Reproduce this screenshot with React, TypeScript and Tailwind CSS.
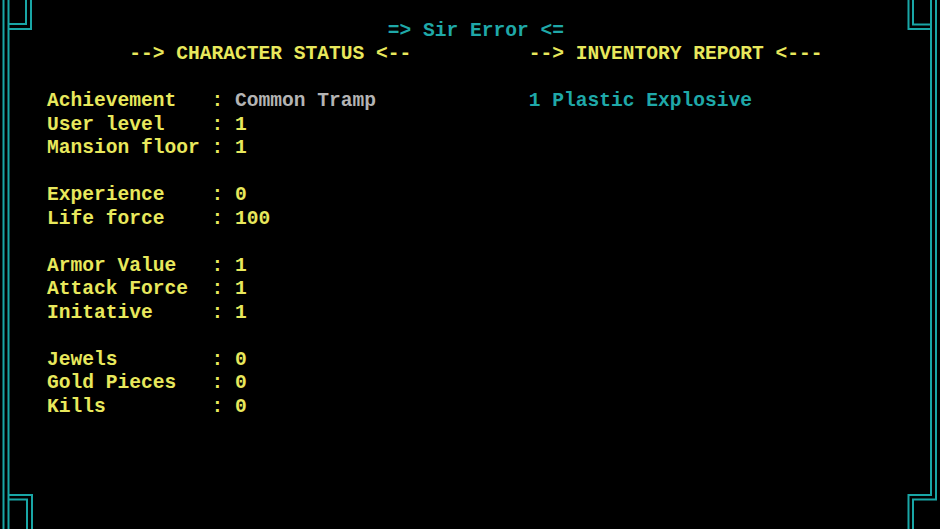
import React from "react";

const Y = "text-[#e8e85c]";
const G = "text-[#b4b4b4]";
const C = "text-[#1fa8a8]";

type Seg = { t: string; c: string };

const stats: [string, string][][] = [
  [["Achievement", "Common Tramp"], ["User level", "1"], ["Mansion floor", "1"]],
  [["Experience", "0"], ["Life force", "100"]],
  [["Armor Value", "1"], ["Attack Force", "1"], ["Initative", "1"]],
  [["Jewels", "0"], ["Gold Pieces", "0"], ["Kills", "0"]],
];

function buildRows(): Seg[][] {
  const rows: Seg[][] = [];
  rows.push([{ t: " ".repeat(33) + "=> Sir Error <=", c: C }]);
  rows.push([
    { t: " ".repeat(11) + "--> CHARACTER STATUS <--", c: Y },
    { t: " ".repeat(10) + "--> INVENTORY REPORT <---", c: Y },
  ]);
  stats.forEach((group) => {
    rows.push([{ t: " ", c: Y }]);
    group.forEach(([label, value]) => {
      const left = "    " + label.padEnd(14, " ") + ": ";
      const row: Seg[] = [
        { t: left, c: Y },
        { t: value, c: label === "Achievement" ? G : Y },
      ];
      if (label === "Achievement") {
        const used = left.length + value.length;
        row.push({ t: " ".repeat(45 - used) + "1 Plastic Explosive", c: C });
      }
      rows.push(row);
    });
  });
  return rows;
}

function Frame() {
  const s = { stroke: "#19a6a6", strokeWidth: 2, fill: "none" };
  return (
    <svg className="absolute inset-0 pointer-events-none" width={940} height={529} viewBox="0 0 940 529">
      {/* left border */}
      <path d="M3.5 0V529M8.5 0V529" {...s} />
      <path d="M26 0V24H8.5M31 0V29H8.5" {...s} />
      <path d="M8.5 495H32V529M8.5 499.5H27V529" {...s} />
      {/* right border */}
      <path d="M931 0V495H908.5V529M936 0V499.5H913V529" {...s} />
      <path d="M913 0V24.5H931M908.5 0V29H931" {...s} />
    </svg>
  );
}

export default function App() {
  const rows = buildRows();

  return (
    <div className="relative w-[940px] h-[529px] bg-black overflow-hidden">
      <Frame />
      <div className="pt-[19.5px] font-['Liberation_Mono',monospace] font-bold text-[19.58px] leading-[23.5px] whitespace-pre">
        {rows.map((row, i) => (
          <div key={i} className="h-[23.5px]">
            {row.map((seg, j) => (
              <span key={j} className={seg.c}>
                {seg.t}
              </span>
            ))}
          </div>
        ))}
      </div>
    </div>
  );
}
